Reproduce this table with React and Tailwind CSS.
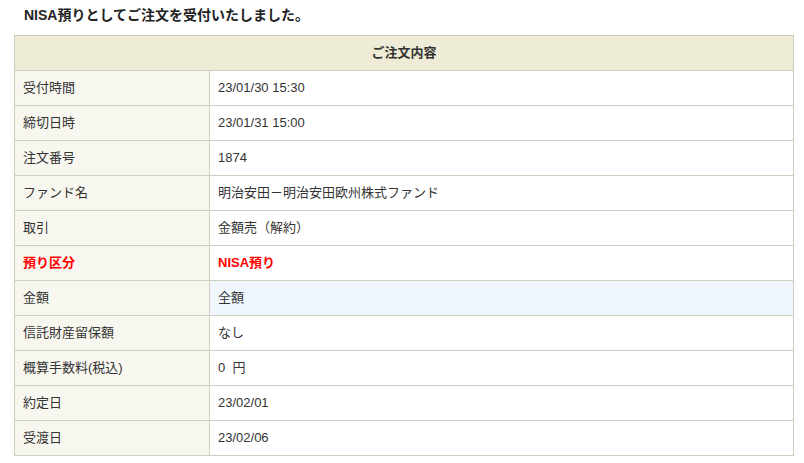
export default function App() {
  const rows = [
    ["受付時間", "23/01/30 15:30"],
    ["締切日時", "23/01/31 15:00"],
    ["注文番号", "1874"],
    ["ファンド名", "明治安田－明治安田欧州株式ファンド"],
    ["取引", "金額売（解約）"],
    ["預り区分", "NISA預り", "red"],
    ["金額", "全額", "blue"],
    ["信託財産留保額", "なし"],
    ["概算手数料(税込)", "0\u00a0\u00a0円"],
    ["約定日", "23/02/01"],
    ["受渡日", "23/02/06"],
  ];
  return (
    <div
      className="w-[804px] h-[463px] bg-white text-[#333333] text-[13px] overflow-hidden"
      style={{ fontFamily: '"Liberation Sans", Arial, "Noto Sans CJK JP", sans-serif' }}
    >
      <div className="pl-[24px] pt-[5px] h-[35px] text-[14px] font-bold leading-[20px] text-[#222]">
        NISA預りとしてご注文を受付いたしました。
      </div>
      <table className="ml-[14px] w-[780px] border-collapse">
        <tbody>
          <tr className="h-[35px]">
            <th
              colSpan={2}
              className="border border-[#cfcdbd] bg-[#eeebd6] text-center font-bold text-[13px] text-[#333]"
            >
              ご注文内容
            </th>
          </tr>
          {rows.map(([k, v, t]) => (
            <tr key={k} className="h-[35px]">
              <td
                className={`w-[195px] border border-[#cfcdbd] bg-[#f8f7ef] pl-[8px] ${
                  t === "red" ? "text-[#ff0000] font-bold" : ""
                }`}
              >
                {k}
              </td>
              <td
                className={`border border-[#cfcdbd] pl-[8px] ${
                  t === "red" ? "text-[#ff0000] font-bold" : ""
                } ${t === "blue" ? "bg-[#eff6fd]" : "bg-white"}`}
              >
                {v}
              </td>
            </tr>
          ))}
        </tbody>
      </table>
    </div>
  );
}
